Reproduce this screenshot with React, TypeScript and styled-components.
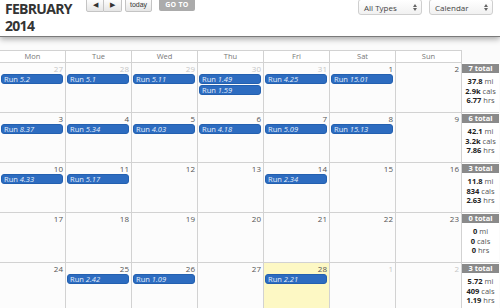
import { Fragment } from "react";
import styled, { createGlobalStyle } from "styled-components";

const GlobalStyle = createGlobalStyle`
  html, body {
    margin: 0;
    padding: 0;
    background: #fbfbfb;
    font-family: "Open Sans", "Liberation Sans", sans-serif;
  }
`;

type Week = {
  days: number[];
  otherMonth: number[];
  events: Record<number, string[]>;
  today?: number;
  total: number;
  mi: string;
  cals: string;
  hrs: string;
};

const weeks: Week[] = [
  {
    days: [27, 28, 29, 30, 31, 1, 2],
    otherMonth: [0, 1, 2, 3, 4],
    events: { 0: ["5.2"], 1: ["5.1"], 2: ["5.11"], 3: ["1.49", "1.59"], 4: ["4.25"], 5: ["15.01"] },
    total: 7,
    mi: "37.8",
    cals: "2.9k",
    hrs: "6.77",
  },
  {
    days: [3, 4, 5, 6, 7, 8, 9],
    otherMonth: [],
    events: { 0: ["8.37"], 1: ["5.34"], 2: ["4.03"], 3: ["4.18"], 4: ["5.09"], 5: ["15.13"] },
    total: 6,
    mi: "42.1",
    cals: "3.2k",
    hrs: "7.86",
  },
  {
    days: [10, 11, 12, 13, 14, 15, 16],
    otherMonth: [],
    events: { 0: ["4.33"], 1: ["5.17"], 4: ["2.34"] },
    total: 3,
    mi: "11.8",
    cals: "834",
    hrs: "2.63",
  },
  {
    days: [17, 18, 19, 20, 21, 22, 23],
    otherMonth: [],
    events: {},
    total: 0,
    mi: "0",
    cals: "0",
    hrs: "0",
  },
  {
    days: [24, 25, 26, 27, 28, 1, 2],
    otherMonth: [5, 6],
    events: { 1: ["2.42"], 2: ["1.09"], 4: ["2.21"] },
    today: 4,
    total: 3,
    mi: "5.72",
    cals: "409",
    hrs: "1.19",
  },
];

const dayNames = ["Mon", "Tue", "Wed", "Thu", "Fri", "Sat", "Sun"];

const Page = styled.div`
  width: 500px;
  height: 308px;
  overflow: hidden;
`;

const Header = styled.header`
  height: 36px;
  background: #fff;
  border-bottom: 1px solid #7a7a7a;
  box-shadow: 0 2px 6px rgba(0, 0, 0, 0.35);
  display: flex;
  align-items: flex-start;
  margin-bottom: 13px;
  position: relative;
  z-index: 1;
`;

const Title = styled.h1`
  margin: 0;
  padding: 0 0 0 5px;
  width: 81px;
  flex: none;
  font-size: 14px;
  letter-spacing: -0.7px;
  line-height: 17px;
  font-weight: 700;
  color: #333;
  white-space: nowrap;
`;

const ButtonGroup = styled.div`
  display: flex;
  margin-top: -2px;
  margin-right: 3px;
`;

const NavButton = styled.button<{ $pos?: "left" | "right" | "single" }>`
  height: 14px;
  padding: 0 4px;
  border: 1px solid #c4c4c4;
  border-left-width: ${(p) => (p.$pos === "right" ? "0" : "1px")};
  border-radius: ${(p) =>
    p.$pos === "left" ? "2px 0 0 2px" : p.$pos === "right" ? "0 2px 2px 0" : "2px"};
  background: linear-gradient(#ffffff, #e6e6e6);
  color: #333;
  font-family: "Liberation Sans", sans-serif;
  font-size: 7px;
  line-height: 12px;
  display: flex;
  align-items: center;
  justify-content: center;
  min-width: 18px;
`;

const GoButton = styled.button`
  height: 13px;
  margin-top: -2px;
  margin-left: 4px;
  padding: 0 6px;
  border: none;
  border-radius: 2px;
  background: #ababab;
  color: #fff;
  font-family: "Open Sans", sans-serif;
  font-weight: 700;
  font-size: 7px;
  letter-spacing: 0.3px;
  line-height: 13px;
`;

const Selects = styled.div`
  margin-left: auto;
  margin-right: -10px;
  margin-top: -1px;
  display: flex;
  gap: 7px;
  align-items: flex-start;
`;

const Select = styled.div`
  width: 64px;
  height: 16px;
  box-sizing: border-box;
  border: 1px solid #cfcfcf;
  border-radius: 3px;
  background: linear-gradient(#ffffff, #f1f1f1);
  display: flex;
  align-items: center;
  justify-content: space-between;
  padding: 0 4px 0 5px;
  font-size: 8px;
  color: #444;
`;

const GearBox = styled.div`
  width: 8px;
  height: 8px;
  margin-top: 1px;
  border: 1px solid #999;
  border-radius: 1px;
  background: #e8e8e8;
`;

const HeadRow = styled.div`
  display: grid;
  grid-template-columns: repeat(7, 66px) 38px;
  margin-left: -1px;
`;

const DayHead = styled.div`
  height: 11px;
  border-top: 1px solid #d2d2d2;
  border-left: 1px solid #d2d2d2;
  border-bottom: 1px solid #d2d2d2;
  background: #fff;
  font-size: 7.5px;
  line-height: 11px;
  text-align: center;
  color: #777;
`;

const HeadSpacer = styled.div`
  border-left: 1px solid #d2d2d2;
`;

const Grid = styled.div`
  display: grid;
  grid-template-columns: repeat(7, 66px) 38px;
  grid-auto-rows: 50px;
  margin-left: -1px;
`;

const Cell = styled.div<{ $today?: boolean }>`
  border-left: 1px solid #d2d2d2;
  border-bottom: 1px solid #d2d2d2;
  background: ${(p) => (p.$today ? "#fdf8c4" : "#fcfcfc")};
  padding: 1px 1px 0 1px;
  display: flex;
  flex-direction: column;
  gap: 1px;
`;

const DayNum = styled.div<{ $other?: boolean }>`
  text-align: right;
  padding-right: 1px;
  height: 9px;
  font-size: 8px;
  line-height: 9px;
  color: ${(p) => (p.$other ? "#c6c6c6" : "#555")};
`;

const Event = styled.div`
  height: 10px;
  box-sizing: border-box;
  margin-right: 1px;
  padding-left: 2px;
  border: 1px solid #2360b0;
  border-radius: 3px;
  background: #2d6cc0;
  color: #e4eefb;
  font-size: 7.5px;
  line-height: 8px;
  white-space: nowrap;
  overflow: hidden;

  em {
    font-style: italic;
  }
`;

const TotalCell = styled.div`
  border-left: 1px solid #d2d2d2;
  border-bottom: 1px solid #d2d2d2;
  background: #fff;
  padding-top: 1px;
  text-align: center;
  font-size: 7.5px;
  color: #555;
`;

const Badge = styled.div`
  height: 9px;
  background: #8a8a8a;
  color: #fff;
  font-weight: 700;
  font-size: 7.5px;
  line-height: 9px;
  margin-bottom: 4px;
`;

const Stat = styled.div`
  line-height: 9.5px;

  b {
    color: #222;
    font-weight: 700;
  }
`;

const UpDown = () => (
  <svg width="4" height="7" viewBox="0 0 4 7">
    <path d="M2 0 L4 3 L0 3 Z" fill="#666" />
    <path d="M0 4 L4 4 L2 7 Z" fill="#666" />
  </svg>
);

const App = () => {
  return (
    <Page>
      <GlobalStyle />
      <Header>
        <Title>
          FEBRUARY
          <br />
          2014
        </Title>
        <ButtonGroup>
          <NavButton $pos="left">◀</NavButton>
          <NavButton $pos="right">▶</NavButton>
        </ButtonGroup>
        <ButtonGroup>
          <NavButton $pos="single">today</NavButton>
        </ButtonGroup>
        <GoButton>GO TO</GoButton>
        <Selects>
          <Select>
            All Types
            <UpDown />
          </Select>
          <Select>
            Calendar
            <UpDown />
          </Select>
          <GearBox />
        </Selects>
      </Header>

      <HeadRow>
        {dayNames.map((d) => (
          <DayHead key={d}>{d}</DayHead>
        ))}
        <HeadSpacer />
      </HeadRow>

      <Grid>
        {weeks.map((w, wi) => (
          <Fragment key={wi}>
            {w.days.map((d, di) => (
              <Cell key={di} $today={w.today === di}>
                <DayNum $other={w.otherMonth.includes(di)}>{d}</DayNum>
                {(w.events[di] || []).map((e, ei) => (
                  <Event key={ei}>
                    Run <em>{e}</em>
                  </Event>
                ))}
              </Cell>
            ))}
            <TotalCell>
              <Badge>{w.total} total</Badge>
              <Stat>
                <b>{w.mi}</b> mi
              </Stat>
              <Stat>
                <b>{w.cals}</b> cals
              </Stat>
              <Stat>
                <b>{w.hrs}</b> hrs
              </Stat>
            </TotalCell>
          </Fragment>
        ))}
      </Grid>
    </Page>
  );
};

export default App;
